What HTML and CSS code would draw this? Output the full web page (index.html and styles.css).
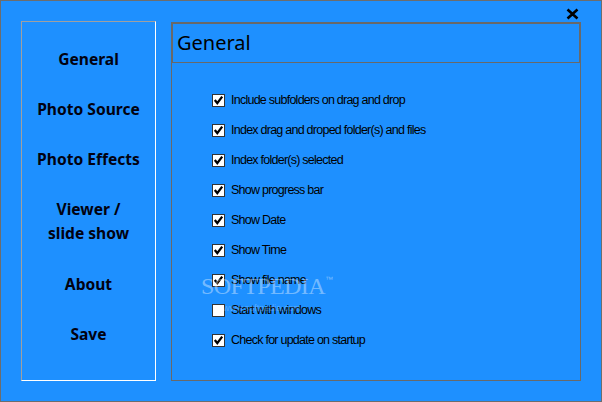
FILE: index.html
```html
<!DOCTYPE html>
<html lang="en">
<head>
    <meta charset="UTF-8">
    <meta name="viewport" content="width=device-width, initial-scale=1.0">
    <title>Settings</title>
    <link rel="stylesheet" href="styles.css">
</head>
<body>

    <div class="window">
        <!-- Close button -->
        <button class="close" title="Close">
            <svg width="13" height="12" viewBox="0 0 13 12">
                <path d="M1.5 1.5 L11.5 10.5 M11.5 1.5 L1.5 10.5" stroke="#000" stroke-width="2.6" fill="none"/>
            </svg>
        </button>

        <div class="layout">
            <!-- Menu -->
            <nav class="menu">
                <a class="item">General</a>
                <a class="item">Photo Source</a>
                <a class="item">Photo Effects</a>
                <a class="item">Viewer /<br>slide show</a>
                <a class="item about">About</a>
                <a class="item">Save</a>
            </nav>

            <!-- Page -->
            <section class="page">
                <div class="page-header">General</div>

                <div class="options">
                    <label class="option"><span class="box checked"></span>Include subfolders on drag and drop</label>
                    <label class="option"><span class="box checked"></span>Index drag and droped folder(s) and files</label>
                    <label class="option"><span class="box checked"></span>Index folder(s) selected</label>
                    <label class="option"><span class="box checked"></span>Show progress bar</label>
                    <label class="option"><span class="box checked"></span>Show Date</label>
                    <label class="option"><span class="box checked"></span>Show Time</label>
                    <label class="option"><span class="box checked"></span>Show file name</label>
                    <label class="option"><span class="box"></span>Start with windows</label>
                    <label class="option"><span class="box checked"></span>Check for update on startup</label>
                </div>
            </section>
        </div>

        <!-- Watermark -->
        <div class="watermark">SOFTPEDIA<sup>™</sup><small>www.softpedia.com</small></div>
    </div>

</body>
</html>
```

FILE: styles.css
```css
body {
    margin: 0;
    font-family: "Liberation Sans", Arial, sans-serif;
}

.window {
    position: relative;
    width: 602px;
    height: 402px;
    box-sizing: border-box;
    border: 1px solid #6d6d6d;
    background-color: #1e90ff;
    overflow: hidden;
}

.close {
    position: absolute;
    top: 7px;
    left: 565px;
    padding: 0;
    border: none;
    background: none;
    line-height: 0;
    cursor: pointer;
}

.layout {
    display: flex;
    gap: 15px;
    padding: 20px;
    height: 100%;
    box-sizing: border-box;
}

.menu {
    display: flex;
    flex-direction: column;
    align-items: center;
    gap: 26px;
    width: 135px;
    box-sizing: border-box;
    padding-top: 25px;
    border: 1px solid #a0a0a0;
    border-right-color: #fff;
    border-bottom-color: #fff;
}

.menu .item {
    font-family: "Noto Sans", "Open Sans", sans-serif;
    font-weight: bold;
    font-size: 15.6px;
    line-height: 24px;
    text-align: center;
    color: #020210;
    cursor: pointer;
}

.menu .about {
    margin-top: 1px;
}

.page {
    flex: 1;
    margin-top: 1px;
    border: 1px solid #696969;
}

.page-header {
    height: 38px;
    border: 1px solid #696969;
    font-family: "Noto Sans", "Open Sans", sans-serif;
    font-size: 20px;
    line-height: 38px;
    padding-left: 4px;
    color: #000;
}

.options {
    display: flex;
    flex-direction: column;
    padding: 22px 0 0 40px;
}

.option {
    display: flex;
    align-items: center;
    height: 30px;
    font-size: 12.5px;
    letter-spacing: -0.75px;
    color: #000;
}

.box {
    width: 13px;
    height: 13px;
    box-sizing: border-box;
    margin-right: 6px;
    border: 1px solid #333;
    background-color: #fff;
}

.box.checked {
    background: #fff url("data:image/svg+xml,%3Csvg xmlns='http://www.w3.org/2000/svg' width='11' height='11'%3E%3Cpath d='M1.8 5 L4.3 8.2 L9.2 1.6' stroke='%23000' stroke-width='2.3' fill='none'/%3E%3C/svg%3E") no-repeat center;
}

.watermark {
    position: absolute;
    left: 200px;
    top: 272px;
    font-family: "Liberation Serif", serif;
    font-size: 24px;
    letter-spacing: -0.6px;
    color: rgba(255, 255, 255, 0.4);
    pointer-events: none;
}

.watermark sup {
    font-family: "Liberation Sans", sans-serif;
    font-size: 8px;
    vertical-align: 12px;
}

.watermark small {
    position: absolute;
    left: 22px;
    top: 30px;
    font-family: "Liberation Sans", sans-serif;
    font-size: 9px;
    letter-spacing: 0;
    color: rgba(255, 255, 255, 0.25);
}
```
